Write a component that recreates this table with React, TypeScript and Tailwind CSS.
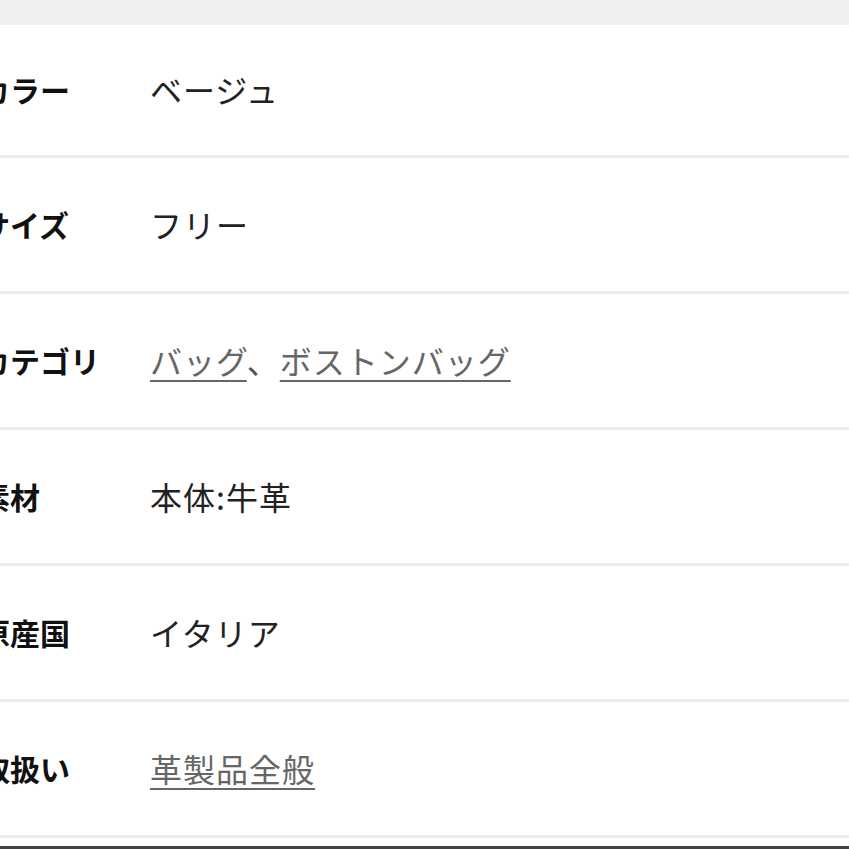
const rows: { label: string; value: string; links?: string[] }[] = [
  { label: "カラー", value: "ベージュ" },
  { label: "サイズ", value: "フリー" },
  { label: "カテゴリ", value: "", links: ["バッグ", "ボストンバッグ"] },
  { label: "素材", value: "本体:牛革" },
  { label: "原産国", value: "イタリア" },
  { label: "取扱い", value: "", links: ["革製品全般"] },
]

export default function App() {
  return (
    <div
      className="w-[849px] h-[849px] overflow-hidden bg-white"
      style={{ fontFamily: '"Noto Sans CJK JP", "Noto Sans", sans-serif' }}
    >
      <div className="h-[25px] bg-[#efefef]" />
      {rows.map((row, i) => (
        <div
          key={row.label}
          className={`flex items-center border-b-[3px] border-[#ededed] ${i === 0 ? "h-[133px]" : "h-[136px]"}`}
        >
          <div className="w-[170px] shrink-0 -ml-[20px] -mt-[2px] text-[30px] font-bold text-[#111] leading-none whitespace-nowrap">
            {row.label}
          </div>
          <div className="-mt-[2px] text-[32px] leading-none tracking-[1px] text-[#222] whitespace-nowrap">
            {row.links
              ? row.links.map((l, j) => (
                  <span key={l}>
                    {j > 0 && <span className="text-[#555]">、</span>}
                    <a className="text-[#666] underline decoration-2 underline-offset-[6px]">{l}</a>
                  </span>
                ))
              : row.value}
          </div>
        </div>
      ))}
      <div className="h-[8px]" />
      <div className="h-[3px] bg-[#444]" />
    </div>
  )
}
